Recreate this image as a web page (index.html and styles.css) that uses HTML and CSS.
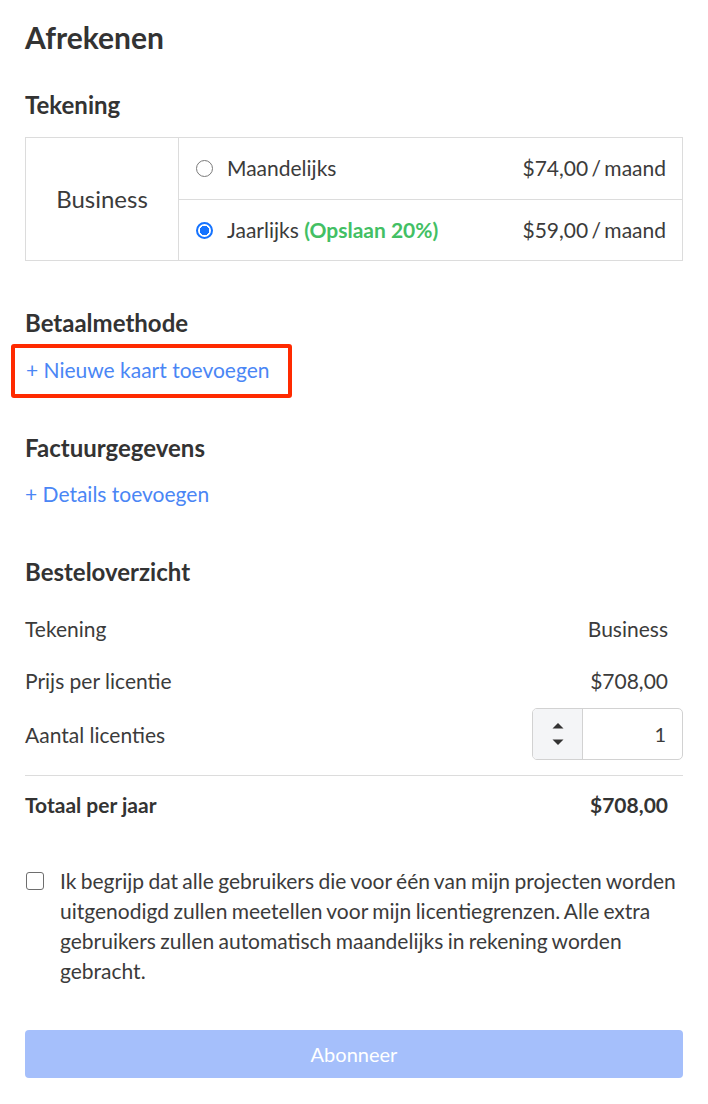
FILE: index.html
```html
<!DOCTYPE html>
<html lang="nl">
<head>
<meta charset="utf-8">
<title>Afrekenen</title>
<link rel="stylesheet" href="styles.css">
</head>
<body>
<main class="page">
  <h1 class="title">Afrekenen</h1>

  <h2 class="section-title first">Tekening</h2>
  <div class="plan">
    <div class="plan-name">Business</div>
    <div class="plan-options">
      <label class="option">
        <span class="radio"></span>
        <span class="option-label">Maandelijks</span>
        <span class="option-price">$74,00 / maand</span>
      </label>
      <label class="option">
        <span class="radio checked"></span>
        <span class="option-label">Jaarlijks <strong class="save">(Opslaan 20%)</strong></span>
        <span class="option-price">$59,00 / maand</span>
      </label>
    </div>
  </div>

  <h2 class="section-title payment">Betaalmethode</h2>
  <div class="highlight"><a class="link" href="#">+ Nieuwe kaart toevoegen</a></div>

  <h2 class="section-title billing">Factuurgegevens</h2>
  <a class="link details" href="#">+ Details toevoegen</a>

  <h2 class="section-title summary-title">Besteloverzicht</h2>
  <div class="summary">
    <div class="summary-row"><span>Tekening</span><span>Business</span></div>
    <div class="summary-row"><span>Prijs per licentie</span><span>$708,00</span></div>
    <div class="summary-row"><span>Aantal licenties</span>
      <div class="qty">
        <div class="stepper">
          <svg width="14" height="26" viewBox="0 0 14 26"><path d="M1.5 7.5 L7 2 L12.5 7.5 Z" fill="#333"/><path d="M1.5 18.5 L7 24 L12.5 18.5 Z" fill="#333"/></svg>
        </div>
        <div class="qty-value">1</div>
      </div>
    </div>
    <div class="summary-total"><span>Totaal per jaar</span><span>$708,00</span></div>
  </div>

  <label class="agree">
    <span class="checkbox"></span>
    <span class="agree-text">Ik begrijp dat alle gebruikers die voor één van mijn projecten worden uitgenodigd zullen meetellen voor mijn licentiegrenzen. Alle extra gebruikers zullen automatisch maandelijks in rekening worden gebracht.</span>
  </label>

  <button class="subscribe" type="button">Abonneer</button>
</main>
</body>
</html>
```
FILE: styles.css
```css
* { box-sizing: border-box; }
html, body { margin: 0; padding: 0; background: #fff; }
body {
  font-family: Lato, "Open Sans", sans-serif;
  color: #3b3b3b;
  font-size: 21px;
}
.page { padding: 20px 25px 0; }

.title {
  margin: 0;
  font-size: 30px;
  line-height: 35px;
  font-weight: 700;
  color: #333;
}
.section-title {
  margin: 0;
  font-size: 24px;
  line-height: 28px;
  font-weight: 700;
  color: #333;
}
.section-title.first { margin-top: 36px; }
.section-title.payment { margin-top: 48px; }
.section-title.billing { margin-top: 36px; }
.section-title.summary-title { margin-top: 51px; }

.plan {
  margin-top: 18px;
  display: flex;
  border: 1px solid #dcdcdc;
}
.plan-name {
  width: 153px;
  flex: none;
  border-right: 1px solid #dcdcdc;
  display: flex;
  align-items: center;
  justify-content: center;
  font-size: 24px;
  padding-bottom: 2px;
}
.plan-options { flex: 1; display: flex; flex-direction: column; }
.option {
  display: flex;
  align-items: center;
  height: 61px;
  padding: 0 16px 2px 17px;
}
.option + .option { border-top: 1px solid #dcdcdc; }
.radio {
  width: 17px; height: 17px;
  border-radius: 50%;
  border: 1.5px solid #7a7a7a;
  flex: none;
  margin-right: 14px;
  margin-top: 2px;
}
.radio.checked {
  border: 2px solid #1573ff;
  background: radial-gradient(circle, #1573ff 0 4.6px, #fff 5px);
}
.option-label { flex: 1; }
.option-price { word-spacing: -2px; }
.save { color: #43bf64; font-weight: 700; }

.highlight {
  display: inline-block;
  margin-top: 7px;
  margin-left: -14px;
  border: 4px solid #ff2a00;
  border-radius: 3px;
  padding: 9px 18px 11px 11px;
}
.link {
  color: #4a86f5;
  text-decoration: none;
  line-height: 26px;
  display: inline-block;
}
.link.details { display: block; margin-top: 19px; }

.summary { margin-top: 18px; }
.summary-row, .summary-total {
  display: flex;
  align-items: center;
  justify-content: space-between;
  height: 52px;
  padding-right: 15px;
  padding-bottom: 3px;
}
.summary-row:nth-child(3) { padding-right: 0; padding-bottom: 0; }
.summary-total {
  margin-top: 15px;
  border-top: 1px solid #dcdcdc;
  height: 57px;
  padding-top: 3px;
  font-weight: 700;
  color: #333;
}
.qty {
  display: flex;
  width: 151px;
  height: 52px;
  border: 1px solid #d2d2d2;
  border-radius: 5px;
  overflow: hidden;
}
.stepper {
  width: 50px;
  flex: none;
  background: #f4f5f7;
  border-right: 1px solid #d2d2d2;
  display: flex;
  align-items: center;
  justify-content: center;
}
.qty-value {
  flex: 1;
  padding-right: 16px;
  display: flex;
  align-items: center;
  justify-content: flex-end;
  font-size: 20px;
}

.agree {
  display: flex;
  margin-top: 34px;
  line-height: 30px;
}
.checkbox {
  width: 18px; height: 18px;
  border: 1.5px solid #6e6e6e;
  border-radius: 3px;
  flex: none;
  margin: 6px 16px 0 1px;
}
.agree-text { flex: 1; word-spacing: -1px; }

.subscribe {
  display: block;
  width: 100%;
  margin-top: 44px;
  height: 48px;
  border: none;
  border-radius: 4px;
  background: #a5bffb;
  color: #fff;
  font-family: Lato, "Open Sans", sans-serif;
  font-size: 20px;
}
```
